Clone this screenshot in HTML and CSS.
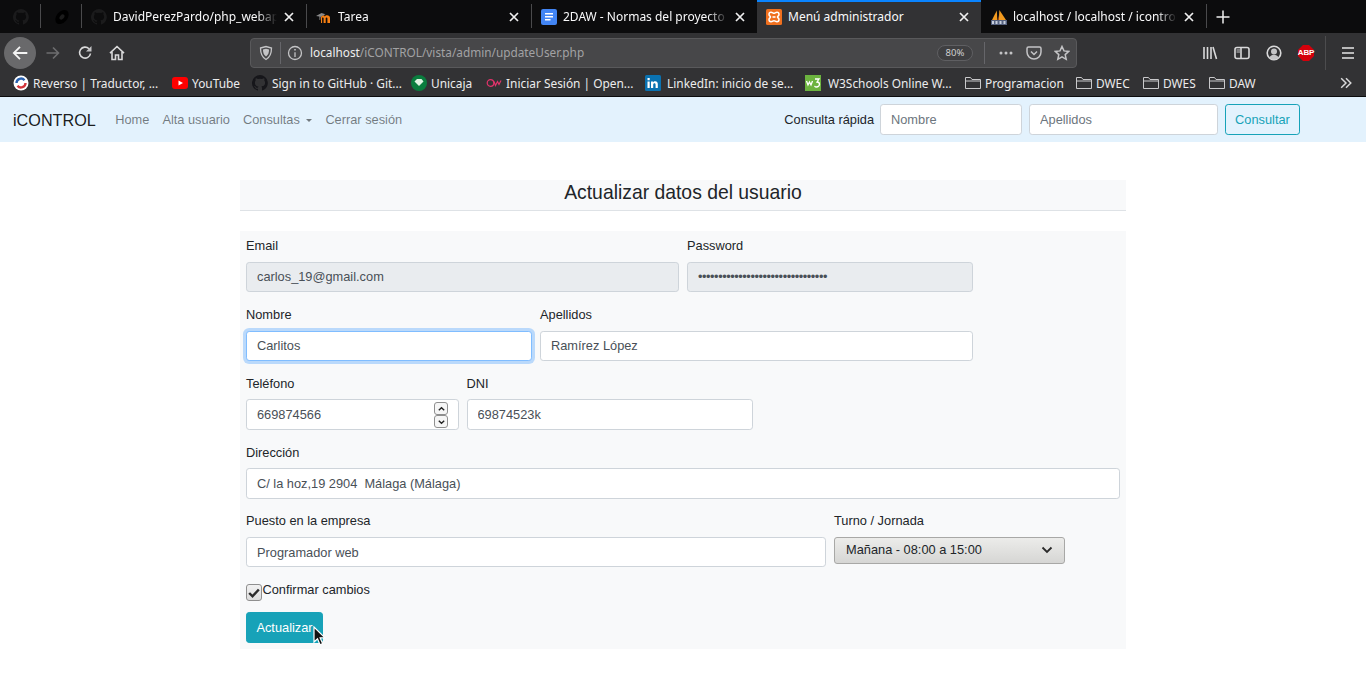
FILE: index.html
```html
<!DOCTYPE html>
<html lang="es">
<head>
<meta charset="utf-8">
<title>Menú administrador</title>
<link rel="stylesheet" href="styles.css">
</head>
<body>
<header class="browser">
  <div class="tabstrip">
    <div class="pinned"><svg class="ic16" viewBox="0 0 16 16"><path fill="#1b1b1c" d="M8 0a8 8 0 0 0-2.5 15.6c.4.1.5-.2.5-.4v-1.4c-2.2.5-2.7-1-2.7-1-.4-.9-.9-1.200-.9-1.200-.7-.5.1-.5.1-.5.8.1 1.200.8 1.200.8.7 1.200 1.900.9 2.300.7.100-.5.300-.9.500-1.100-1.800-.2-3.600-.9-3.600-4 0-.9.300-1.600.8-2.100-.1-.2-.4-1 .1-2.100 0 0 .7-.2 2.200.8a7.600 7.600 0 0 1 4 0c1.500-1 2.200-.8 2.200-.8.500 1.100.2 1.900.1 2.100.5.600.8 1.300.8 2.100 0 3.100-1.900 3.700-3.700 3.900.3.300.6.800.6 1.500v2.200c0 .2.100.5.600.4A8 8 0 0 0 8 0z"/></svg></div>
    <span class="tabsep"></span>
    <div class="pinned"><svg class="ic16" viewBox="0 0 16 16"><ellipse cx="8" cy="8" rx="8" ry="5.500" transform="rotate(-50 8 8)" fill="#000"/><ellipse cx="8" cy="8" rx="3" ry="2" transform="rotate(-50 8 8)" fill="#1c1c1c"/></svg></div>
    <span class="tabsep"></span>
    <div class="tab">
      <svg class="ic16" viewBox="0 0 16 16"><path fill="#1b1b1c" d="M8 0a8 8 0 0 0-2.500 15.600c.4.100.5-.2.5-.4v-1.400c-2.200.5-2.700-1-2.700-1-.4-.9-.9-1.200-.9-1.200-.7-.5.1-.5.1-.5.8.1 1.200.8 1.200.8.700 1.200 1.900.9 2.300.7.100-.5.300-.9.500-1.100-1.800-.2-3.600-.9-3.600-4 0-.9.300-1.600.8-2.100-.1-.2-.4-1 .1-2.100 0 0 .7-.2 2.200.8a7.600 7.600 0 0 1 4 0c1.500-1 2.200-.8 2.200-.8.500 1.100.2 1.900.1 2.100.5.600.8 1.300.8 2.100 0 3.100-1.900 3.700-3.700 3.900.3.300.6.800.6 1.500v2.200c0 .2.100.5.600.4A8 8 0 0 0 8 0z"/></svg>
      <span class="tabtitle">DavidPerezPardo/php_webapp</span>
      <svg class="tabclose" viewBox="0 0 12 12"><path d="M2 2l8 8M10 2l-8 8"/></svg>
    </div>
    <span class="tabsep"></span>
    <div class="tab">
      <svg class="ic16" viewBox="0 0 16 16"><path fill="#f98012" d="M5 14V8.500c0-1.500 1-2.200 2-2.200s1.600.6 1.800 1.100C9.200 6.700 10 6.300 11 6.300c1.800 0 3 .9 3 2.700V14h-2.600V9.300c0-.6-.3-.9-.8-.9s-.9.300-.9.900V14H7.600V9.300c0-.6-.3-.9-.8-.9-.3 0-.5.100-.7.300V14z"/><path fill="#8a8a8a" d="M0 7l5.500-3 4 1.300L5 7.500l-.5.500-.3 3-.7 0-.1-3.500z"/></svg>
      <span class="tabtitle">Tarea</span>
      <svg class="tabclose" viewBox="0 0 12 12"><path d="M2 2l8 8M10 2l-8 8"/></svg>
    </div>
    <span class="tabsep"></span>
    <div class="tab tab-wide">
      <svg class="ic16" viewBox="0 0 16 16"><rect width="16" height="16" rx="2" fill="#4285f4"/><path fill="#fff" d="M4 4h8v1.500H4zM4 7h8v1.500H4zM4 10h5.500v1.500H4z"/></svg>
      <span class="tabtitle">2DAW - Normas del proyecto final</span>
      <svg class="tabclose" viewBox="0 0 12 12"><path d="M2 2l8 8M10 2l-8 8"/></svg>
    </div>
    <div class="tab tab-active">
      <svg class="ic16" viewBox="0 0 16 16"><rect width="16" height="16" rx="1.500" fill="#f0701f"/><path fill="none" stroke="#fff" stroke-width="1.500" d="M5 3.200c1.500 0 2 1 3 1s1.500-1 3-1 2 1.200 2 2.200c0 1.500-1.500 1.800-1.500 2.600s1.500 1.100 1.500 2.600c0 1-.5 2.200-2 2.200s-2-1-3-1-1.500 1-3 1-2-1.200-2-2.200C3 9.100 4.500 8.800 4.500 8S3 6.900 3 5.400c0-1 .5-2.200 2-2.200z"/><path fill="#fff" d="M6.500 7.200h3v1.600h-3z"/></svg>
      <span class="tabtitle">Menú administrador</span>
      <svg class="tabclose" viewBox="0 0 12 12"><path d="M2 2l8 8M10 2l-8 8"/></svg>
    </div>
    <div class="tab tab-pma">
      <svg class="ic16" viewBox="0 0 16 16"><path fill="#f29a1f" d="M1 11L5.800 1.500 6.300 11z"/><path fill="#f29a1f" d="M7.800 11l.6-10L15 11z"/><path fill="#b8561a" d="M6.700 11l.8-5 .3 5z"/><rect x="0" y="11" width="16" height="5" fill="#55617f"/><path fill="#c8cfdd" d="M1 12h2v3H1zM4.500 12h2v3h-2zM8.500 12h2v3h-2zM12.500 12h2v3h-2z"/></svg>
      <span class="tabtitle">localhost / localhost / icontrol</span>
      <svg class="tabclose" viewBox="0 0 12 12"><path d="M2 2l8 8M10 2l-8 8"/></svg>
    </div>
    <span class="tabsep"></span>
    <svg class="newtab" viewBox="0 0 16 16"><path d="M8 1.500v13M1.500 8h13"/></svg>
  </div>

  <div class="toolbar">
    <button class="tb tb-back"><svg viewBox="0 0 16 16"><path d="M14.500 8h-12M8 2.500L2.500 8 8 13.500"/></svg></button>
    <button class="tb tb-dim"><svg viewBox="0 0 16 16"><path d="M1.500 8h12M8 2.500L13.500 8 8 13.500"/></svg></button>
    <button class="tb"><svg viewBox="0 0 16 16"><path d="M13.500 8.500A5.500 5.500 0 1 1 12 3.800"/><path class="fill" d="M14.500 1v5.500H9z"/></svg></button>
    <button class="tb"><svg viewBox="0 0 16 16"><path d="M1 8.200L8 1.500l7 6.700M3 7v7.500h3.500V10h3v4.500H13V7"/></svg></button>
    <div class="urlbar">
      <svg class="url-ic" viewBox="0 0 16 16"><path d="M2.500 3L8 1.500 13.500 3c0 5-1 9-5.500 11.500C3.500 12 2.500 8 2.500 3z"/><path class="fill" d="M5 4.500L8 3.700l3 .8c0 3-.5 5-3 7-2.500-2-3-4-3-7z"/></svg>
      <span class="url-sep"></span>
      <svg class="url-ic" viewBox="0 0 16 16"><circle cx="8" cy="8" r="6.500"/><path d="M8 7.200V12"/><path class="fill" d="M7.200 4h1.600v1.600H7.200z"/></svg>
      <span class="url-text"><span class="url-host">localhost</span>/iCONTROL/vista/admin/updateUser.php</span>
      <span class="zoom-pill">80%</span>
      <span class="url-sep url-sep-end"></span>
      <svg class="url-act" viewBox="0 0 16 16"><circle class="fill" cx="3" cy="8" r="1.500"/><circle class="fill" cx="8" cy="8" r="1.500"/><circle class="fill" cx="13" cy="8" r="1.500"/></svg>
      <svg class="url-act" viewBox="0 0 16 16"><path d="M2.500 2h11A1.500 1.500 0 0 1 15 3.500V7a7 7 0 0 1-14 0V3.500A1.500 1.500 0 0 1 2.500 2z"/><path d="M5 6.500l3 3 3-3"/></svg>
      <svg class="url-act" viewBox="0 0 16 16"><path d="M8 1.500l2 4.400 4.800.5-3.600 3.200 1 4.700L8 11.900l-4.200 2.400 1-4.700L1.200 6.400 6 5.900z"/></svg>
    </div>
    <div class="tb-right">
      <button class="tb"><svg viewBox="0 0 16 16"><path d="M2 2v12M5.500 2v12M9 2v12M11 2l3.500 12"/></svg></button>
      <button class="tb"><svg viewBox="0 0 16 16"><rect x="1" y="2.500" width="14" height="11" rx="2"/><path d="M7 2.500v11"/><path class="fill" d="M2.500 4.500H6v1H2.500zM2.500 6.500H6v1H2.500z"/></svg></button>
      <button class="tb"><svg viewBox="0 0 16 16"><circle cx="8" cy="8" r="6.800"/><circle class="fill" cx="8" cy="6.500" r="3"/><path class="fill" d="M3.500 12.500c1-2 2.500-2.800 4.500-2.800s3.500.8 4.500 2.800C11.500 14 10 14.500 8 14.500s-3.500-.5-4.500-2z"/></svg></button>
      <button class="tb"><svg class="abp" viewBox="0 0 16 16"><path d="M5 0h6l5 5v6l-5 5H5l-5-5V5z"/></svg><span class="abp-txt">ABP</span></button>
      <span class="tb-sep"></span>
      <button class="tb tb-menu"><svg viewBox="0 0 16 16"><path d="M2 3h12M2 8h12M2 13h12"/></svg></button>
    </div>
  </div>

  <div class="bookmarks">
    <span class="bm bm-w1"><svg class="ic16" viewBox="0 0 16 16"><circle cx="8" cy="8" r="7.500" fill="#fff"/><path d="M3.500 8a4.500 4.500 0 0 1 8-2.800" fill="none" stroke="#2a62b0" stroke-width="2.400"/><path d="M12.500 8a4.500 4.500 0 0 1-8 2.800" fill="none" stroke="#d2353b" stroke-width="2.400"/></svg>Reverso | Traductor, ...</span>
    <span class="bm bm-w2"><svg class="ic16" viewBox="0 0 16 16"><rect y="2" width="16" height="12" rx="3" fill="#f00"/><path d="M6.500 5.500v5L11 8z" fill="#fff"/></svg>YouTube</span>
    <span class="bm bm-w3"><svg class="ic16" viewBox="0 0 16 16"><path fill="#16161a" d="M8 0a8 8 0 0 0-2.500 15.600c.4.100.5-.2.5-.4v-1.400c-2.200.5-2.700-1-2.700-1-.4-.9-.9-1.200-.9-1.200-.7-.5.1-.5.1-.5.8.1 1.200.8 1.200.8.700 1.200 1.900.9 2.300.7.100-.5.300-.9.500-1.100-1.800-.2-3.600-.9-3.600-4 0-.9.300-1.600.8-2.100-.1-.2-.4-1 .1-2.100 0 0 .7-.2 2.200.8a7.600 7.600 0 0 1 4 0c1.500-1 2.200-.8 2.200-.8.500 1.100.2 1.900.1 2.100.5.600.8 1.300.8 2.100 0 3.100-1.900 3.700-3.700 3.900.3.300.6.800.6 1.500v2.200c0 .2.100.5.600.4A8 8 0 0 0 8 0z"/></svg>Sign in to GitHub · Git...</span>
    <span class="bm bm-w4"><svg class="ic16" viewBox="0 0 16 16"><circle cx="8" cy="8" r="8" fill="#0a7d3e"/><path d="M3.500 6.500L6 4h4.500l2 2.500L8 11z" fill="#dff3e2"/></svg>Unicaja</span>
    <span class="bm bm-w5"><svg class="ic16" viewBox="0 0 16 16"><circle cx="4.500" cy="8" r="3.300" fill="none" stroke="#e2336b" stroke-width="1.200"/><path d="M8 6.500l1.500 4 2-4 1.500 3 2-4" fill="none" stroke="#e2336b" stroke-width="1.200"/></svg>Iniciar Sesión | Open...</span>
    <span class="bm bm-w6"><svg class="ic16" viewBox="0 0 16 16"><rect width="16" height="16" rx="1.500" fill="#0a72b1"/><path fill="#fff" d="M2.500 6.500h2.200V13H2.500zM2.500 3h2.200v2.200H2.500zM6 6.500h2.100v.9c.4-.6 1.100-1.100 2.100-1.100 2 0 2.600 1.300 2.600 3.100V13h-2.200V9.800c0-.9-.3-1.500-1.100-1.500-.9 0-1.300.6-1.300 1.500V13H6z"/></svg>LinkedIn: inicio de se...</span>
    <span class="bm bm-w7"><svg class="ic16" viewBox="0 0 16 16"><rect width="16" height="16" fill="#6cb33f"/><path fill="none" stroke="#fff" stroke-width="1.300" d="M1.500 6l1.500 4 1.500-3 1.500 3 1.500-4M10 4h4l-2 3c1.500 0 2.500.8 2.500 2.300S13 12 11.500 12 10 11.500 9.500 11"/></svg>W3Schools Online W...</span>
    <span class="bm bm-w8"><svg class="folder" viewBox="0 0 16 16"><path d="M.5 13.500v-11h5l1.500 2h8.500v9zM.5 6h15"/></svg>Programacion</span>
    <span class="bm bm-w9"><svg class="folder" viewBox="0 0 16 16"><path d="M.5 13.500v-11h5l1.500 2h8.500v9zM.5 6h15"/></svg>DWEC</span>
    <span class="bm bm-w10"><svg class="folder" viewBox="0 0 16 16"><path d="M.5 13.500v-11h5l1.500 2h8.500v9zM.5 6h15"/></svg>DWES</span>
    <span class="bm"><svg class="folder" viewBox="0 0 16 16"><path d="M.5 13.500v-11h5l1.500 2h8.500v9zM.5 6h15"/></svg>DAW</span>
    <svg class="bm-more" viewBox="0 0 16 16"><path d="M2.500 2.500L8 8l-5.500 5.500M8 2.500L13.500 8 8 13.500"/></svg>
  </div>
</header>

<nav class="navbar">
  <div class="nav-left">
    <a class="brand">iCONTROL</a>
    <a class="navlink">Home</a>
    <a class="navlink">Alta usuario</a>
    <a class="navlink">Consultas<span class="caret"></span></a>
    <a class="navlink">Cerrar sesión</a>
  </div>
  <form class="quick">
    <span class="quick-label">Consulta rápida</span>
    <input class="field quick-name" placeholder="Nombre">
    <input class="field quick-last" placeholder="Apellidos">
    <button type="button" class="btn-outline">Consultar</button>
  </form>
</nav>

<main class="page">
  <h1 class="title">Actualizar datos del usuario</h1>
  <form class="card">
    <div class="row">
      <div class="group span6"><label>Email</label><input class="field" value="carlos_19@gmail.com" disabled></div>
      <div class="group span4"><label>Password</label><input class="field field-pass" type="password" value="carlos1234567890carlos1234567890" disabled></div>
    </div>
    <div class="row">
      <div class="group span4"><label>Nombre</label><input class="field focused" value="Carlitos"></div>
      <div class="group span6"><label>Apellidos</label><input class="field" value="Ramírez López"></div>
    </div>
    <div class="row">
      <div class="group span3">
        <label>Teléfono</label>
        <div class="number-wrap">
          <input class="field" value="669874566">
          <span class="spin">
            <span class="spin-btn"><svg viewBox="0 0 10 6"><path d="M2 4.500L5 1.500l3 3"/></svg></span>
            <span class="spin-btn"><svg viewBox="0 0 10 6"><path d="M2 1.500l3 3 3-3"/></svg></span>
          </span>
        </div>
      </div>
      <div class="group span4"><label>DNI</label><input class="field" value="69874523k"></div>
    </div>
    <div class="row">
      <div class="group span12"><label>Dirección</label><input class="field" value="C/ la hoz,19 2904  Málaga (Málaga)"></div>
    </div>
    <div class="row">
      <div class="group span8"><label>Puesto en la empresa</label><input class="field" value="Programador web"></div>
      <div class="group span4">
        <label>Turno / Jornada</label>
        <div class="select">Mañana - 08:00 a 15:00<svg viewBox="0 0 12 8"><path d="M1.500 1.500L6 6l4.500-4.500"/></svg></div>
      </div>
    </div>
    <div class="check-row">
      <span class="checkbox"><svg viewBox="0 0 16 16"><path d="M2.500 8l3.800 3.800L13.500 4"/></svg></span>
      <label class="check-label">Confirmar cambios</label>
    </div>
    <div class="btn-wrap">
      <button type="button" class="btn-primary">Actualizar</button>
      <svg class="cursor" viewBox="0 0 13 20"><path d="M1 1v15l3.500-3.300 2.500 6 2.600-1.100-2.500-5.800H12z"/></svg>
    </div>
  </form>
</main>
</body>
</html>
```
FILE: styles.css
```css
* { box-sizing: border-box; }
html, body { margin: 0; padding: 0; background: #fff; }
body { width: 1366px; height: 700px; overflow: hidden; font-family: "Liberation Sans", Arial, sans-serif; font-size: 12.8px; line-height: 19.2px; color: #212529; }
button { font: inherit; margin: 0; }
svg { flex: none; display: block; }
.ic16 { width: 16px; height: 16px; }

/* browser */
.browser { height: 97px; font-family: "Noto Sans", sans-serif; font-size: 12px; color: #f9f9fa; background: #323234; border-bottom: 1px solid #0c0c0d; }
.tabstrip { height: 33px; display: flex; align-items: center; background: #0c0c0d; }
.pinned { width: 40px; height: 33px; display: flex; align-items: center; justify-content: center; padding-left: 1px; }
.tabsep { width: 1px; height: 24px; background: #4a4a4c; flex: none; margin-top: -1px; }
.tab { width: 224px; height: 33px; display: flex; align-items: center; padding: 0 11px 0 9px; flex: none; }
.tab .ic16 { margin-right: 6px; }
.tabtitle { flex: 1; overflow: hidden; white-space: nowrap; font-size: 12px; min-width: 0; -webkit-mask-image: linear-gradient(to right, #000 88%, transparent 100%); mask-image: linear-gradient(to right, #000 88%, transparent 100%); }
.tab-active .tabtitle { -webkit-mask-image: none; mask-image: none; }
.tabclose { width: 12px; height: 12px; margin-left: 6px; fill: none; stroke: #f0f0f0; stroke-width: 1.700; }
.tab-wide { width: 225px; }
.tab-active { background: #323234; border-top: 2px solid #0a84ff; padding-bottom: 2px; }
.tab-pma { padding-left: 10px; width: 225px; }
.newtab { width: 16px; height: 16px; margin-left: 8px; fill: none; stroke: #eee; stroke-width: 1.500; }

.toolbar { height: 40px; display: flex; align-items: center; padding-left: 4px; background: #323234; }
.tb { width: 32px; height: 32px; padding: 0; border: 0; background: none; border-radius: 50%; display: flex; align-items: center; justify-content: center; position: relative; }
.tb svg { width: 16px; height: 16px; fill: none; stroke: #d9d9da; stroke-width: 1.600; }
.tb .fill, .urlbar .fill { fill: #c4c4c6; stroke: none; }
.tb-back { background: #69696b; margin-right: 1px; }
.tb-back svg { stroke: #f4f4f4; width: 18px; height: 18px; }
.tb-dim svg { stroke: #6d6d6f; }
.urlbar { width: 827px; height: 30px; margin-left: 117px; display: flex; align-items: center; background: #474749; border: 1px solid #59595b; border-radius: 4px; padding-left: 7px; }
.url-ic { width: 16px; height: 16px; fill: none; stroke: #c4c4c6; stroke-width: 1.300; }
.url-sep { width: 1px; height: 22px; background: #66666a; margin: 0 6px; flex: none; }
.url-text { flex: 1; font-size: 11.800px; color: #a2a2a4; margin-left: 7px; white-space: nowrap; }
.url-host { color: #eeeeef; }
.zoom-pill { width: 36px; height: 16px; border: 1px solid #5f5f62; border-radius: 8px; font-size: 9.500px; line-height: 14px; text-align: center; color: #cfcfd0; background: #3f3f41; margin-right: 6px; }
.url-sep-end { margin: 0 13px 0 5px; }
.url-act { width: 16px; height: 16px; margin-right: 12px; fill: none; stroke: #c4c4c6; stroke-width: 1.500; }
.url-act:last-child { margin-right: 6px; }
.tb-right { display: flex; align-items: center; margin-left: 117px; }
.tb svg.abp { fill: #d5000b; stroke: none; }
.abp-txt { position: absolute; left: 6px; right: 6px; top: 11px; font: bold 8px/10px "Liberation Sans", sans-serif; color: #fff; text-align: center; letter-spacing: -.2px; }
.tb-sep { width: 1px; height: 34px; background: #4c4c4e; margin: 0 6px 0 3px; }
.tb-menu svg { stroke: #e6e6e6; stroke-width: 1.700; }

.bookmarks { height: 23px; display: flex; align-items: center; padding: 0 0 2px 13px; background: #323234; position: relative; }
.bm { display: flex; align-items: center; white-space: nowrap; gap: 4px; color: #ececed; font-size: 11.900px; flex: none; }
.bm-w1 { width: 159px; } .bm-w2 { width: 80px; } .bm-w3 { width: 159px; } .bm-w4 { width: 75px; } .bm-w5 { width: 159px; } .bm-w6 { width: 160px; gap: 6px; } .bm-w7 { width: 160px; gap: 7px; } .bm-w8 { width: 111px; } .bm-w9 { width: 67px; } .bm-w10 { width: 66px; }
.bm-more { width: 14px; height: 14px; position: absolute; left: 1339px; top: 3px; fill: none; stroke: #d9d9da; stroke-width: 1.700; }
.folder { width: 16px; height: 16px; fill: none; stroke: #c9c9cb; stroke-width: 1; }

/* navbar */
.navbar { height: 45px; background: #e3f2fd; display: flex; align-items: center; justify-content: space-between; padding: 0 66px 0 13px; }
.nav-left { display: flex; align-items: center; }
.brand { font-size: 16.200px; color: rgba(0,0,0,.9); margin-right: 13px; line-height: 24px; }
.navlink { color: rgba(0,0,0,.5); padding: 0 6.500px; }
.caret { display: inline-block; margin-left: 6.500px; vertical-align: 2px; border-top: 3.500px solid; border-left: 3.500px solid transparent; border-right: 3.500px solid transparent; }
.quick { display: flex; align-items: center; flex: none; }
.quick-label { margin-right: 6px; white-space: nowrap; }
.field { display: block; width: 100%; height: 30.400px; padding: 4.800px 10px; font: 12.8px/19.2px "Liberation Sans", Arial, sans-serif; color: #495057; background: #fff; border: 1px solid #ced4da; border-radius: 3.200px; outline: 0; }
.field::placeholder { color: #6c757d; opacity: 1; }
.field:disabled { background: #e9ecef; color: #495057; }
.field-pass { letter-spacing: -.45px; }
.field.focused { border-color: #80bdff; box-shadow: 0 0 0 3px rgba(0,123,255,.25); }
.quick-name { width: 142px; margin-right: 7px; flex: none; }
.quick-last { width: 189px; margin-right: 7px; flex: none; }
.btn-outline { height: 30.800px; width: 75px; flex: none; padding: 0; color: #17a2b8; background: transparent; border: 1px solid #17a2b8; border-radius: 3.200px; }

/* page */
.page { width: 886px; margin: 38px auto 0 240px; }
.title { margin: 0 0 20px; height: 31px; background: #f8f9fa; border-bottom: 1px solid #dee2e6; font-size: 19.350px; font-weight: 400; line-height: 24px; text-align: center; color: #212529; }
.card { height: 418px; background: #f8f9fa; padding: 5.200px 6px 0; }
.row { display: grid; grid-template-columns: repeat(12, 1fr); column-gap: 8px; }
.group { margin-bottom: 12.800px; }
.group label { display: block; margin-bottom: 6.400px; }
.span3 { grid-column: span 3; } .span4 { grid-column: span 4; } .span6 { grid-column: span 6; } .span8 { grid-column: span 8; } .span12 { grid-column: span 12; }
.number-wrap { position: relative; }
.spin { position: absolute; left: 188px; top: 3px; width: 14px; display: flex; flex-direction: column; }
.spin-btn { height: 13px; border: 1px solid #8f8f8f; border-radius: 3px; background: #f6f6f6; display: flex; align-items: center; justify-content: center; }
.spin-btn svg { width: 9px; height: 6px; fill: none; stroke: #222; stroke-width: 1.500; }
.select { width: 231px; height: 27px; padding: 0 11px 1px 11px; display: flex; align-items: center; justify-content: space-between; color: #212529; background: linear-gradient(#ececea, #d6d6d4); border: 1px solid #a8a8a6; border-radius: 3px; }
.select svg { width: 12px; height: 8px; fill: none; stroke: #2a2a2a; stroke-width: 1.800; }
.check-row { display: flex; align-items: flex-start; height: 31.800px; }
.checkbox { width: 16px; height: 17px; margin: 4px .5px 0 0; border: 1px solid #8f8f8f; border-radius: 3px; background: linear-gradient(#f2f2f2, #dcdcdc); display: flex; align-items: center; justify-content: center; flex: none; }
.checkbox svg { width: 14px; height: 14px; fill: none; stroke: #2b2b2b; stroke-width: 2.800; }
.check-label { display: block; }
.btn-wrap { position: relative; }
.btn-primary { width: 77px; height: 31px; padding: 0; color: #fff; background: #17a2b8; border: 1px solid #17a2b8; border-radius: 3.200px; }
.cursor { position: absolute; left: 67px; top: 14px; width: 13px; height: 20px; fill: #111; stroke: #fff; stroke-width: 1.200; }
```
